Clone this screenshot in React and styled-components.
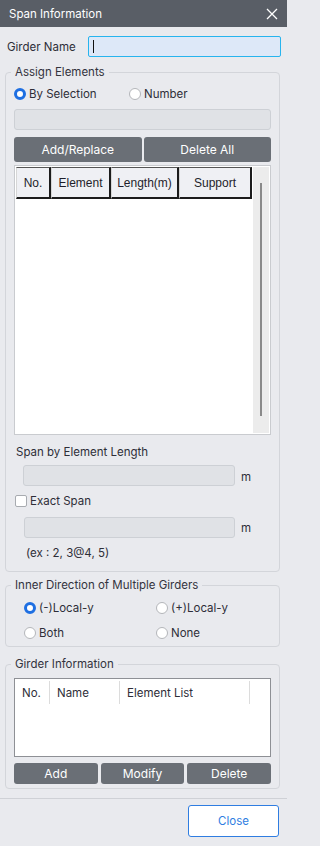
import React from "react";
import styled, { createGlobalStyle } from "styled-components";

const Global = createGlobalStyle`
  html, body { margin: 0; padding: 0; background: #e9eaee; }
  * { box-sizing: border-box; }
`;

const Dialog = styled.div`
  width: 287px;
  height: 846px;
  background: #e9eaee;
  font-family: Inter, "Noto Sans", sans-serif;
  font-size: 11.5px;
  color: #2e2e38;
  display: flex;
  flex-direction: column;
  overflow: hidden;
`;

const TitleBar = styled.div`
  height: 27px;
  flex: none;
  background: #595e66;
  color: #fff;
  display: flex;
  align-items: center;
  justify-content: space-between;
  padding: 0 9px 0 9px;
  font-size: 11.5px;
`;

const CloseIcon = styled.svg`
  width: 12px;
  height: 12px;
  display: block;
`;

const Content = styled.div`
  padding: 9px 7px 0 5px;
  display: flex;
  flex-direction: column;
`;

const NameRow = styled.div`
  display: flex;
  align-items: center;
  padding-left: 2px;
`;

const Label = styled.span`
  line-height: 16px;
  white-space: nowrap;
`;

const NameInput = styled.div`
  margin-left: auto;
  margin-right: -1px;
  width: 193px;
  height: 21px;
  background: #dde8f8;
  border: 1px solid #27b4ee;
  border-radius: 2px;
  display: flex;
  align-items: center;
  padding-left: 4px;
`;

const Caret = styled.span`
  width: 1px;
  height: 13px;
  background: #111;
`;

const Fieldset = styled.fieldset`
  margin: ${(p) => p.$mt}px 0 0 0;
  padding: ${(p) => p.$pt}px 8px ${(p) => p.$pb}px 8px;
  border: 1px solid #d3d5da;
  border-radius: 4px;
  min-inline-size: 0;
  display: flex;
  flex-direction: column;
`;

const Legend = styled.legend`
  padding: 0 4px;
  margin-left: -3px;
  line-height: 16px;
  color: #33333d;
`;

const RadioRow = styled.div`
  display: flex;
  align-items: center;
  height: 20px;
`;

const RadioItem = styled.label`
  display: flex;
  align-items: center;
  gap: 3px;
  width: ${(p) => p.$w}px;
  flex: none;
  line-height: 16px;
`;

const RadioDot = styled.span`
  width: 12px;
  height: 12px;
  border-radius: 50%;
  background: #fff;
  flex: none;
  border: ${(p) => (p.$on ? "3.5px solid #1e6fe2" : "1px solid #b4b6ba")};
`;

const DisabledBar = styled.div`
  height: 21px;
  background: #e0e2e6;
  border: 1px solid #cdd0d5;
  border-radius: 3px;
  margin-top: ${(p) => p.$mt || 0}px;
  margin-left: ${(p) => p.$ml || 0}px;
  width: ${(p) => (p.$w ? p.$w + "px" : "auto")};
  flex: none;
`;

const ButtonRow = styled.div`
  display: grid;
  grid-template-columns: repeat(${(p) => p.$n}, 1fr);
  gap: ${(p) => p.$gap}px;
  margin-top: ${(p) => p.$mt}px;
`;

const DarkButton = styled.div`
  height: ${(p) => p.$h}px;
  background: #6a6f76;
  color: #fff;
  border-radius: 3px;
  display: flex;
  align-items: center;
  justify-content: center;
  font-size: 12px;
`;

const ListBox = styled.div`
  margin-top: 3px;
  height: 270px;
  border: 1px solid #c9cbcf;
  padding: 1px;
  background: #fff;
  display: flex;
`;

const ListMain = styled.div`
  flex: 1;
  background: #fff;
`;

const HeaderGrid = styled.div`
  display: grid;
  grid-template-columns: 35px 60px 68px 73px;
  height: 32px;
`;

const HeadCell = styled.div`
  background: #eff0f4;
  border-top: 1px solid #555;
  border-left: 1px solid #d6d6d6;
  border-right: 2px solid #1c1c1c;
  border-bottom: 2px solid #1c1c1c;
  display: flex;
  align-items: center;
  justify-content: center;
  font-family: "Liberation Sans", Arial, sans-serif;
  font-size: 12px;
  color: #1e1e2a;
`;

const ScrollTrack = styled.div`
  width: 16px;
  flex: none;
  background: #ececec;
  display: flex;
  justify-content: center;
  padding: 16px 0 17px;
`;

const ScrollThumb = styled.div`
  width: 2px;
  background: #8a8a8a;
`;

const SubLabel = styled.div`
  line-height: 16px;
  margin-top: ${(p) => p.$mt}px;
  margin-left: ${(p) => p.$ml}px;
`;

const UnitRow = styled.div`
  display: flex;
  align-items: center;
  margin-top: ${(p) => p.$mt}px;
`;

const Unit = styled.span`
  margin-left: 6px;
  margin-top: ${(p) => p.$dy || 0}px;
`;

const CheckRow = styled.label`
  display: flex;
  align-items: center;
  gap: 3px;
  height: 16px;
  margin-top: 7px;
  margin-left: 1px;
`;

const CheckBox = styled.span`
  width: 12px;
  height: 12px;
  border: 1px solid #a8abb0;
  border-radius: 2px;
  background: #fff;
`;

const RadioGrid = styled.div`
  display: grid;
  grid-template-columns: 132px 1fr;
  row-gap: 5px;
  padding-left: 10px;
`;

const InfoTable = styled.div`
  height: 79px;
  flex: none;
  background: #fff;
  border: 1px solid #8e9095;
`;

const InfoHeader = styled.div`
  display: grid;
  grid-template-columns: 35px 70px 130px 1fr;
  height: 25px;
  padding-top: 2px;
`;

const InfoCell = styled.div`
  display: flex;
  align-items: center;
  padding-left: 7px;
  border-right: ${(p) => (p.$last ? "none" : "1px solid #dcdcdc")};
`;

const Separator = styled.div`
  height: 1px;
  background: #cfd1d6;
  margin-top: 9px;
`;

const Footer = styled.div`
  display: flex;
  justify-content: flex-end;
  padding: 6px 8px 0 0;
`;

const CloseButton = styled.div`
  width: 91px;
  height: 32px;
  background: #fff;
  border: 1px solid #2f7de1;
  border-radius: 3px;
  color: #2f7de1;
  display: flex;
  align-items: center;
  justify-content: center;
`;

function Radio({ on, label, w }) {
  return (
    <RadioItem $w={w}>
      <RadioDot $on={on} />
      <span>{label}</span>
    </RadioItem>
  );
}

export default function App() {
  return (
    <>
      <Global />
      <Dialog>
        <TitleBar>
          <span>Span Information</span>
          <CloseIcon viewBox="0 0 12 12">
            <path d="M1 1 L11 11 M11 1 L1 11" stroke="#fff" strokeWidth="1.3" fill="none" />
          </CloseIcon>
        </TitleBar>
        <Content>
          <NameRow>
            <Label>Girder Name</Label>
            <NameInput>
              <Caret />
            </NameInput>
          </NameRow>

          <Fieldset $mt={7} $pt={4} $pb={10}>
            <Legend>Assign Elements</Legend>
            <RadioRow>
              <Radio on label="By Selection" w={115} />
              <Radio label="Number" w={80} />
            </RadioRow>
            <DisabledBar $mt={5} />
            <ButtonRow $n={2} $gap={2} $mt={7}>
              <DarkButton $h={25}>Add/Replace</DarkButton>
              <DarkButton $h={25}>Delete All</DarkButton>
            </ButtonRow>
            <ListBox>
              <ListMain>
                <HeaderGrid>
                  <HeadCell>No.</HeadCell>
                  <HeadCell>Element</HeadCell>
                  <HeadCell>Length(m)</HeadCell>
                  <HeadCell>Support</HeadCell>
                </HeaderGrid>
              </ListMain>
              <ScrollTrack>
                <ScrollThumb />
              </ScrollTrack>
            </ListBox>
            <SubLabel $mt={9} $ml={2}>Span by Element Length</SubLabel>
            <UnitRow $mt={5}>
              <DisabledBar $ml={9} $w={212} />
              <Unit $dy={3}>m</Unit>
            </UnitRow>
            <CheckRow>
              <CheckBox />
              <span>Exact Span</span>
            </CheckRow>
            <UnitRow $mt={8}>
              <DisabledBar $ml={10} $w={211} />
              <Unit $dy={0}>m</Unit>
            </UnitRow>
            <SubLabel $mt={7} $ml={12}>(ex : 2, 3@4, 5)</SubLabel>
          </Fieldset>

          <Fieldset $mt={5} $pt={5} $pb={3}>
            <Legend>Inner Direction of Multiple Girders</Legend>
            <RadioGrid>
              <RadioRow>
                <Radio on label="(-)Local-y" w={120} />
              </RadioRow>
              <RadioRow>
                <Radio label="(+)Local-y" w={100} />
              </RadioRow>
              <RadioRow>
                <Radio label="Both" w={100} />
              </RadioRow>
              <RadioRow>
                <Radio label="None" w={100} />
              </RadioRow>
            </RadioGrid>
          </Fieldset>

          <Fieldset $mt={9} $pt={6} $pb={4}>
            <Legend>Girder Information</Legend>
            <InfoTable>
              <InfoHeader>
                <InfoCell>No.</InfoCell>
                <InfoCell>Name</InfoCell>
                <InfoCell>Element List</InfoCell>
                <InfoCell $last />
              </InfoHeader>
            </InfoTable>
            <ButtonRow $n={3} $gap={3} $mt={6}>
              <DarkButton $h={21}>Add</DarkButton>
              <DarkButton $h={21}>Modify</DarkButton>
              <DarkButton $h={21}>Delete</DarkButton>
            </ButtonRow>
          </Fieldset>
        </Content>
        <Separator />
        <Footer>
          <CloseButton>Close</CloseButton>
        </Footer>
      </Dialog>
    </>
  );
}
